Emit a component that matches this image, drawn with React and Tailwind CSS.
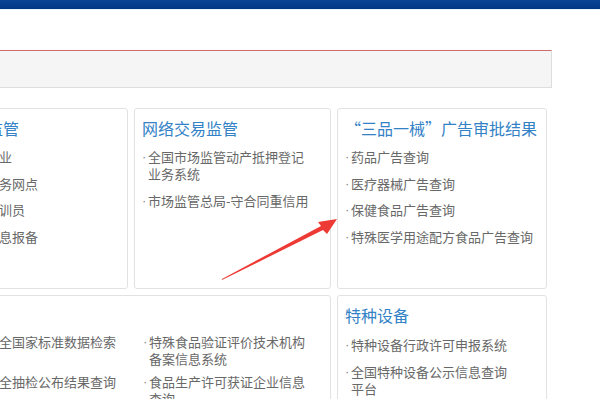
import React from "react";

const font = { fontFamily: '"Noto Sans CJK SC", "Noto Sans", sans-serif' };

function Item({ lines }) {
  return (
    <li className="flex text-[13px] leading-[17px] text-[#686868]">
      <span className="w-[6px] shrink-0 text-[#888888] [font-family:'Liberation_Sans',sans-serif]">·</span>
      <span className="flex flex-col whitespace-nowrap">
        {lines.map((l, i) => (
          <span key={i}>{l}</span>
        ))}
      </span>
    </li>
  );
}

function Heading({ children, className = "" }) {
  return (
    <div className={`h-[24px] text-[16px] leading-[24px] whitespace-nowrap text-[#3382c6] ${className}`}>
      {children}
    </div>
  );
}

export default function App() {
  return (
    <div className="relative h-[399px] w-[600px] overflow-hidden bg-white" style={font}>
      <div className="h-[9px] bg-gradient-to-b from-[#0a4496] to-[#023783]" />
      <div className="h-[1px] bg-[#e6f2fb]" />
      <div className="mt-[40px] h-[38px] w-[552px] border-t border-r border-b border-t-[#cf6b6b] border-r-[#dddddd] border-b-[#dedede] bg-[#f5f5f5]" />

      <div className="mt-[20px] flex gap-[6px]">
        <div className="-ml-[80px] h-[181px] w-[208px] shrink-0 rounded-[3px] border border-[#e2e2e2] px-[7px] pt-[7px]">
          <Heading className="-ml-[5px]">认证认可监管</Heading>
          <ul className="mt-[8px] flex flex-col gap-[9.5px]">
            <Item lines={["获证组织企业"]} />
            <Item lines={["认证机构服务网点"]} />
            <Item lines={["检验检测培训员"]} />
            <Item lines={["认证活动信息报备"]} />
          </ul>
        </div>
        <div className="h-[181px] w-[197px] shrink-0 rounded-[3px] border border-[#e2e2e2] px-[7px] pt-[7px]">
          <Heading>网络交易监管</Heading>
          <ul className="mt-[8px] flex flex-col gap-[9.5px]">
            <Item lines={["全国市场监管动产抵押登记", "业务系统"]} />
            <Item lines={["市场监管总局-守合同重信用"]} />
          </ul>
        </div>
        <div className="h-[181px] w-[210px] shrink-0 rounded-[3px] border border-[#e2e2e2] px-[7px] pt-[7px]">
          <Heading>“三品一械”广告审批结果</Heading>
          <ul className="mt-[8px] flex flex-col gap-[9.5px]">
            <Item lines={["药品广告查询"]} />
            <Item lines={["医疗器械广告查询"]} />
            <Item lines={["保健食品广告查询"]} />
            <Item lines={["特殊医学用途配方食品广告查询"]} />
          </ul>
        </div>
      </div>

      <div className="mt-[6px] flex gap-[6px]">
        <div className="-ml-[80px] h-[140px] w-[411px] shrink-0 rounded-[3px] border border-[#e2e2e2] px-[7px] pt-[7px]">
          <Heading>食品</Heading>
          <div className="mt-[6px] ml-[65px] grid grid-cols-[150px_1fr] gap-y-[6px]">
            <ul>
              <Item lines={["全国家标准数据检索"]} />
            </ul>
            <ul>
              <Item lines={["特殊食品验证评价技术机构", "备案信息系统"]} />
            </ul>
            <ul>
              <Item lines={["全抽检公布结果查询"]} />
            </ul>
            <ul>
              <Item lines={["食品生产许可获证企业信息", "查询"]} />
            </ul>
          </div>
        </div>
        <div className="h-[140px] w-[210px] shrink-0 rounded-[3px] border border-[#e2e2e2] px-[7px] pt-[7px]">
          <Heading>特种设备</Heading>
          <ul className="mt-[8.5px] flex flex-col gap-[10px]">
            <Item lines={["特种设备行政许可申报系统"]} />
            <Item lines={["全国特种设备公示信息查询", "平台"]} />
          </ul>
        </div>
      </div>

      <svg className="pointer-events-none absolute top-0 left-0" width="600" height="399" viewBox="0 0 600 399">
        <polygon
          points="221.5,279.2 321,226 318,222 337,219 327,234 323,230 222.5,279.8"
          fill="#ee3a34"
        />
      </svg>
    </div>
  );
}
